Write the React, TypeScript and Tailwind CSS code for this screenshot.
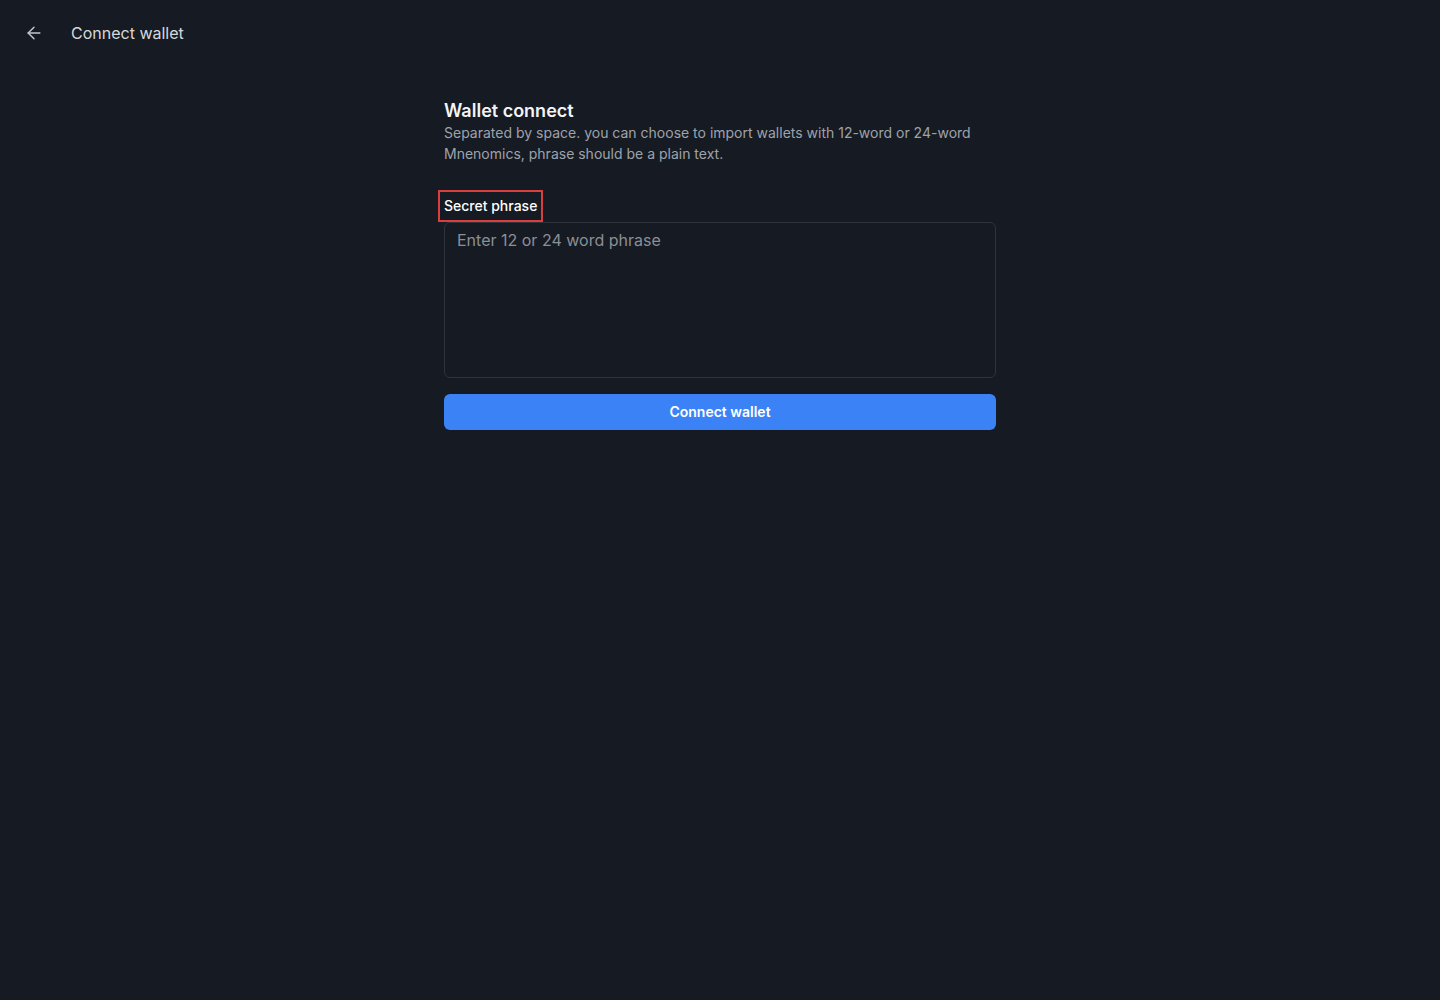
import React, { useState } from 'react';
import { ArrowLeft } from 'lucide-react';

const App: React.FC = () => {
  const [phrase, setPhrase] = useState('');

  return (
    <div className="min-h-screen w-full bg-[#161a22] font-['Inter',sans-serif] text-white">
      {/* Header */}
      <header className="flex h-[66px] items-center px-6">
        <button className="flex h-5 w-5 items-center justify-center text-[#c4c7cd]">
          <ArrowLeft size={20} strokeWidth={1.75} />
        </button>
        <span className="ml-[27px] text-base text-[#d6d8dc]">Connect wallet</span>
      </header>

      {/* Form */}
      <main className="flex justify-center pt-[33px]">
        <div className="w-[552px]">
          <h1 className="text-lg font-semibold leading-6 text-[#f3f4f6]">Wallet connect</h1>
          <p className="-mt-[1px] text-sm leading-[21px] text-[#9ea3ab]">
            Separated by space. you can choose to import wallets with 12-word or 24-word Mnenomics, phrase should be a plain text.
          </p>

          <div className="mt-[26px]">
            <div className="-ml-[6px] inline-block border-2 border-[#d93f3f] px-1 py-[5px]">
              <label className="block text-sm font-medium leading-[18px] text-white">Secret phrase</label>
            </div>
          </div>

          <textarea
            value={phrase}
            onChange={e => setPhrase(e.target.value)}
            placeholder="Enter 12 or 24 word phrase"
            className="block h-[156px] w-full resize-none rounded-md border border-[#2e333c] bg-transparent px-3 pt-[5px] pb-2 text-base text-white outline-none placeholder:text-[#8a8f98]"
          />

          <button className="mt-4 flex h-9 w-full items-center justify-center rounded-md bg-[#3b82f6] text-sm font-semibold text-white">
            Connect wallet
          </button>
        </div>
      </main>
    </div>
  );
};

export default App;
